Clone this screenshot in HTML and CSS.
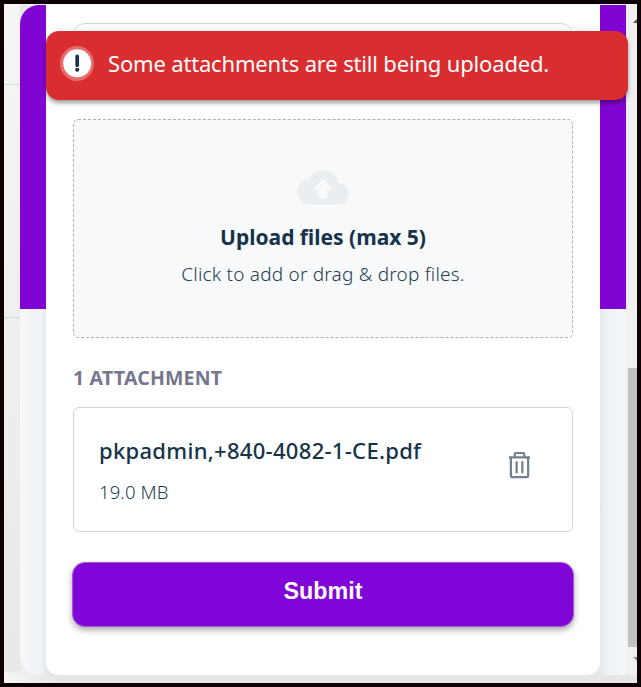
FILE: index.html
```
<!DOCTYPE html>
<html lang="en">
<head>
<meta charset="utf-8">
<title>Attachments</title>
<link rel="stylesheet" href="styles.css">
</head>
<body>
<div class="frame">
  <div class="gutter"></div>
  <div class="widget">
    <main class="viewport">
      <section class="card">
        <div class="field"></div>
        <div class="dropzone">
          <svg class="cloud" viewBox="0 4 24 16" aria-hidden="true"><path d="M19.35 10.04A7.49 7.49 0 0 0 12 4C9.11 4 6.6 5.64 5.35 8.04A5.994 5.994 0 0 0 0 14c0 3.31 2.69 6 6 6h13c2.76 0 5-2.24 5-5 0-2.64-2.05-4.78-4.65-4.96zM14 13v4h-4v-4H7l5-5 5 5h-3z"/></svg>
          <div class="drop-title"><span>Upload files (max 5)</span></div>
          <div class="drop-hint"><span>Click to add or drag &amp; drop files.</span></div>
        </div>
        <h2 class="heading"><span>1 ATTACHMENT</span></h2>
        <div class="file">
          <div class="file-info">
            <div class="file-name"><span>pkpadmin,+840-4082-1-CE.pdf</span></div>
            <div class="file-size"><span>19.0 MB</span></div>
          </div>
          <svg class="trash" viewBox="0 0 24 28" aria-hidden="true"><path d="M1 6h22M3 6v19.5q0 1.2 1.2 1.2h15.6q1.2 0 1.2-1.2V6M7 6V2.7q0-1.2 1.2-1.2h7.6q1.2 0 1.2 1.2V6M9 10v12.5M15 10v12.5"/></svg>
        </div>
        <button class="submit">Submit</button>
      </section>
    </main>
    <div class="scrollbar">
      <i class="arrow up"></i>
      <i class="thumb"></i>
      <i class="arrow down"></i>
    </div>
  </div>
  <div class="toast" role="alert">
    <svg class="alert" viewBox="0 0 34 36" aria-hidden="true"><ellipse cx="17" cy="17.5" rx="17" ry="17.5" fill="#e66b6e"/><circle cx="17.2" cy="17.3" r="14" fill="#fff"/><path d="M17.2 10.4v8.8" stroke="#153449" stroke-width="3.7" stroke-linecap="round"/><circle cx="17.2" cy="23.8" r="2" fill="#153449"/></svg>
    <div class="toast-text"><span>Some attachments are still being uploaded.</span></div>
  </div>
</div>
</body>
</html>
```
FILE: styles.css
```
* { box-sizing: border-box; }
body { margin: 0; background: #0c0000; font-family: "Noto Sans", "Open Sans", sans-serif; color: #153449; }
.frame {
  position: relative; width: 641px; height: 687px; display: flex; overflow: hidden;
  border: 4px solid #0c0000;
  background: linear-gradient(#f4f4f4 0 1px, transparent 1px), linear-gradient(45deg, #f8f8f8, #e6e6e6 40px, #e6e6e6);
}
.gutter {
  width: 16px; height: 668px; flex: none;
  background:
    linear-gradient(#d3d6e6, #d3d6e6) 0 80px / 16px 1px no-repeat,
    linear-gradient(#d5d5df, #d5d5df) 0 313px / 16px 1px no-repeat,
    linear-gradient(100deg, #f6f6f6, #e8e8e8);
}
.widget {
  width: 617px; height: 670px; margin-top: 1px; display: flex; overflow: hidden;
  border-radius: 19px 0 0 19px; flex: none;
}
.viewport {
  width: 606px; padding: 0 26px;
  background: linear-gradient(#8005d3 304px, transparent 304px),
    linear-gradient(90deg, #f7f8f9, #edf1f5 22px, #e4e8ee 26px, #e4e8ee 580px, #edf1f5 586px, #f6f7f9);
}
.card {
  height: 670px; background: #fff; border-radius: 0 0 13px 13px; padding: 18px 27px 0;
  display: flex; flex-direction: column;
}
.field { height: 60px; flex: none; border: 1px solid #cdd7e0; border-radius: 12px; }
.dropzone {
  margin-top: 36px; height: 219px; flex: none; border: 1px dashed #aab3bb; border-radius: 5px;
  background: #f8f9fb; display: flex; flex-direction: column; align-items: center; padding-top: 50px;
}
.cloud { width: 52px; height: 35px; fill: #ebeef0; flex: none; }
.drop-title { margin-top: 17px; height: 30px; line-height: 30px; font-size: 21px; font-weight: 700; letter-spacing: 0; white-space: nowrap; }
.drop-hint { margin-top: 7px; height: 30px; line-height: 30px; font-size: 19px; font-weight: 300; color: #1f3d51; white-space: nowrap; letter-spacing: .2px; }
.heading { margin: 26px 0 0; height: 28px; line-height: 28px; font-size: 19.5px; font-weight: 700; color: #76768e; letter-spacing: .2px; white-space: nowrap; }
.file {
  margin-top: 15px; height: 125px; flex: none; border: 1px solid #cdd7e0; border-radius: 6px;
  display: flex; align-items: flex-start; justify-content: space-between; padding: 26px 41px 0 25px;
}
.file-name { height: 32px; line-height: 32px; font-size: 22px; font-weight: 500; white-space: nowrap; letter-spacing: .3px; }
.file-size { margin-top: 12px; height: 28px; line-height: 28px; font-size: 18.5px; font-weight: 300; color: #1f3d51; white-space: nowrap; letter-spacing: .1px; }
.trash { width: 23px; height: 28px; margin-top: 17px; fill: none; stroke: #72808c; stroke-width: 2.3; }
.submit {
  margin: 30px -1px 0; height: 65px; flex: none; border: 1px solid #a45bce; border-radius: 13px;
  background: #8005d8; color: #fff; font: 700 23.3px/28px "Liberation Sans", Arial, sans-serif;
  padding: 0 0 8px; box-shadow: 0 3px 6px rgba(0,0,0,.34);
}
.scrollbar { width: 11px; background: #f0f0f0; display: flex; flex-direction: column; align-items: flex-end; overflow: hidden; padding-top: 14px; flex: none; }
.arrow { width: 8px; height: 4px; flex: none; margin-right: -4px; background: #555; }
.up { clip-path: polygon(50% 0, 100% 100%, 0 100%); }
.down { clip-path: polygon(0 0, 100% 0, 50% 100%); margin-top: 10px; background: #8c8c8c; }
.thumb { width: 9px; height: 279px; margin-top: 345px; background: #c1c1c1; flex: none; }
.toast {
  position: absolute; left: 42px; top: 27px; width: 582px; height: 69px; border-radius: 13px;
  background: #d92d30; color: #fff; display: flex; align-items: flex-start; padding: 15px 0 0 14px;
  box-shadow: 0 3px 4px rgba(0,0,0,.38);
}
.alert { width: 34px; height: 36px; flex: none; }
.toast-text { margin-left: 14px; height: 34px; line-height: 34px; font-size: 22px; white-space: nowrap; letter-spacing: -.17px; }
```
